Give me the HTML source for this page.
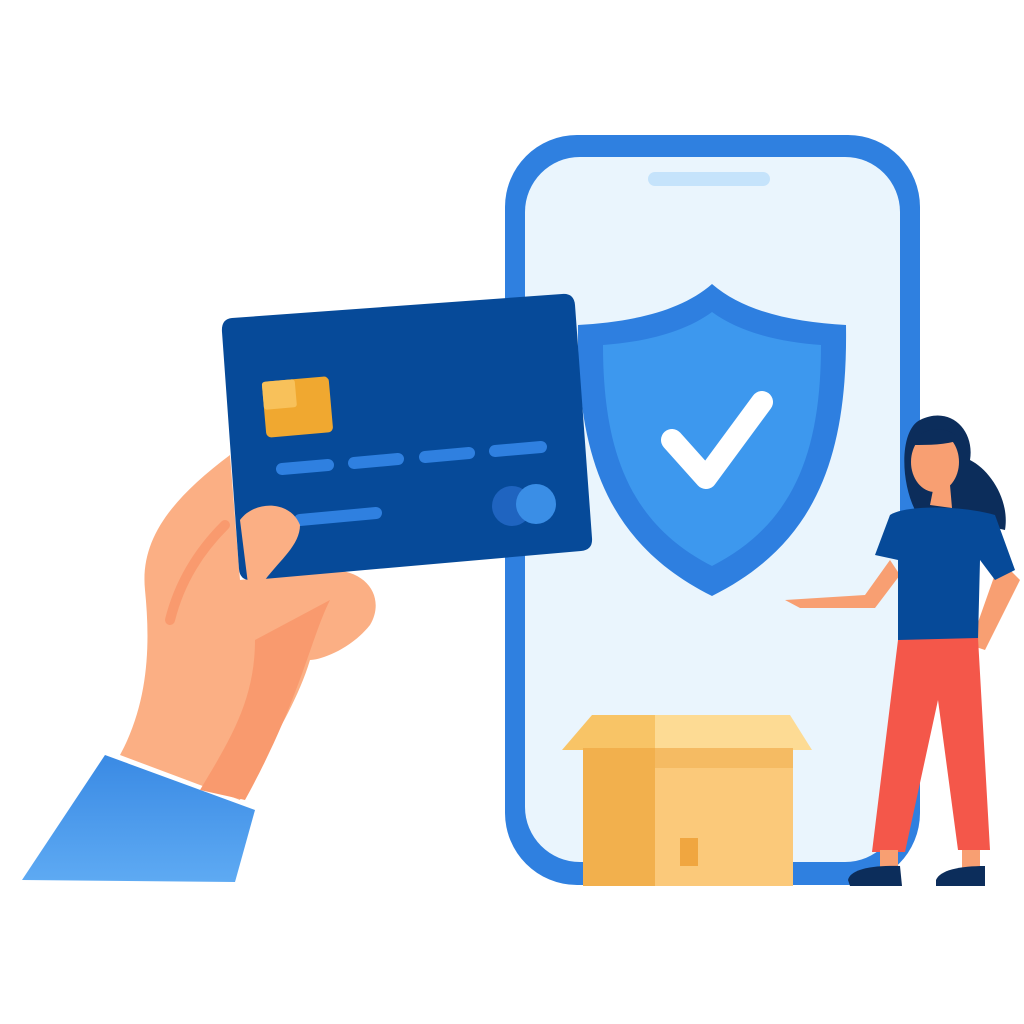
<!DOCTYPE html>
<html><head><meta charset="utf-8"><style>html,body{margin:0;padding:0;background:#fff;width:1024px;height:1024px;overflow:hidden}</style></head>
<body>
<svg width="1024" height="1024" viewBox="0 0 1024 1024" xmlns="http://www.w3.org/2000/svg">
<defs>
<linearGradient id="sl" x1="0" y1="0" x2="0" y2="1"><stop offset="0" stop-color="#3a8ae4"/><stop offset="1" stop-color="#5eaaf3"/></linearGradient>
</defs>
<rect x="505" y="135" width="415" height="750" rx="72" fill="#2f80e0"/>
<rect x="525" y="157" width="375" height="705" rx="55" fill="#eaf5fd"/>
<rect x="648" y="172" width="122" height="14" rx="7" fill="#c5e3fb"/>
<path d="M712 284 C680 312 630 322 578 325 C576 460 610 545 712 596 C814 545 848 460 846 325 C794 322 744 312 712 284Z" fill="#2e7fe0"/>
<path d="M712 312 C685 332 645 342 603 345 C603 455 632 525 712 566 C792 525 821 455 821 345 C779 342 739 332 712 312Z" fill="#3d98ee"/>
<path d="M672 440 L706 478 L762 402" fill="none" stroke="#fff" stroke-width="22" stroke-linecap="round" stroke-linejoin="round"/>
<path d="M22 880 L105 755 L255 810 L235 882 Z" fill="url(#sl)"/>
<path d="M120 755 C150 700 150 640 145 590 C140 540 170 500 230 455 L240 580 L330 570 C370 570 385 600 370 625 C350 650 320 660 310 660 C295 710 260 760 240 800 Z" fill="#fbaf84"/>
<path d="M200 790 C230 740 255 700 255 640 L330 600 C310 640 300 700 245 800 Z" fill="#f99a6e"/>
<path d="M170 620 C180 580 200 550 225 525" stroke="#f99a6e" stroke-width="10" fill="none" stroke-linecap="round"/>
<path d="M232 318 L562 294 Q574 293 575 305 L592 538 Q593 550 581 551 L252 580 Q240 581 239 569 L222 332 Q221 319 232 318Z" fill="#064a99"/>
<rect x="264" y="379" width="67" height="56" rx="5" fill="#f0a830" transform="rotate(-5 297 407)"/>
<rect x="264" y="379" width="33" height="28" rx="3" fill="#f8c15a" transform="rotate(-5 297 407)"/>
<g stroke="#2f80e0" stroke-width="12" stroke-linecap="round">
<line x1="282" y1="469" x2="328" y2="465"/><line x1="354" y1="463" x2="398" y2="459"/>
<line x1="425" y1="457" x2="469" y2="453"/><line x1="495" y1="451" x2="541" y2="447"/>
<line x1="300" y1="520" x2="376" y2="513"/>
</g>
<circle cx="512" cy="506" r="20" fill="#1f64c0"/><circle cx="536" cy="504" r="20" fill="#3a8ee6"/>
<path d="M240 520 C255 500 290 500 300 525 C300 545 280 560 265 580 L250 600 Z" fill="#fbaf84"/>
<path d="M562 750 L592 715 L655 715 L655 750Z" fill="#f8c466"/>
<path d="M655 715 L790 715 L812 750 L655 750Z" fill="#fddb94"/>
<rect x="583" y="748" width="72" height="138" fill="#f2b04d"/>
<rect x="655" y="748" width="138" height="138" fill="#fbc97a"/>
<rect x="655" y="748" width="138" height="20" fill="#f5bb63"/>
<rect x="680" y="838" width="18" height="28" fill="#f0a640"/>
<path d="M920 420 C950 405 975 430 970 460 C990 470 1010 500 1005 530 L960 520 L915 510 C900 480 900 430 920 420Z" fill="#0c2d5b"/>
<path d="M935 480 L930 505 L952 508 L950 485Z" fill="#f89f72"/>
<ellipse cx="935" cy="462" rx="24" ry="30" fill="#f89f72"/>
<path d="M912 445 C920 425 950 425 960 440 C945 445 930 445 912 445Z" fill="#0c2d5b"/>
<path d="M785 600 L865 595 L890 560 L900 575 L875 608 L800 608Z" fill="#f89f72"/>
<path d="M1000 560 L1020 580 L985 650 L970 645Z" fill="#f89f72"/>
<path d="M890 515 C905 505 960 505 995 515 L1015 570 L995 580 L980 560 L978 640 L898 642 L898 560 L875 555Z" fill="#064a99"/>
<path d="M898 640 L978 638 L990 850 L958 850 L938 700 L905 852 L872 852Z" fill="#f4574a"/>
<rect x="880" y="850" width="18" height="18" fill="#f89f72"/><rect x="962" y="850" width="18" height="18" fill="#f89f72"/>
<path d="M848 880 C850 870 870 865 900 866 L902 886 L850 886Z" fill="#0c2d5b"/>
<path d="M936 880 C940 870 960 866 985 866 L985 886 L936 886Z" fill="#0c2d5b"/>
</svg>
</body></html>
